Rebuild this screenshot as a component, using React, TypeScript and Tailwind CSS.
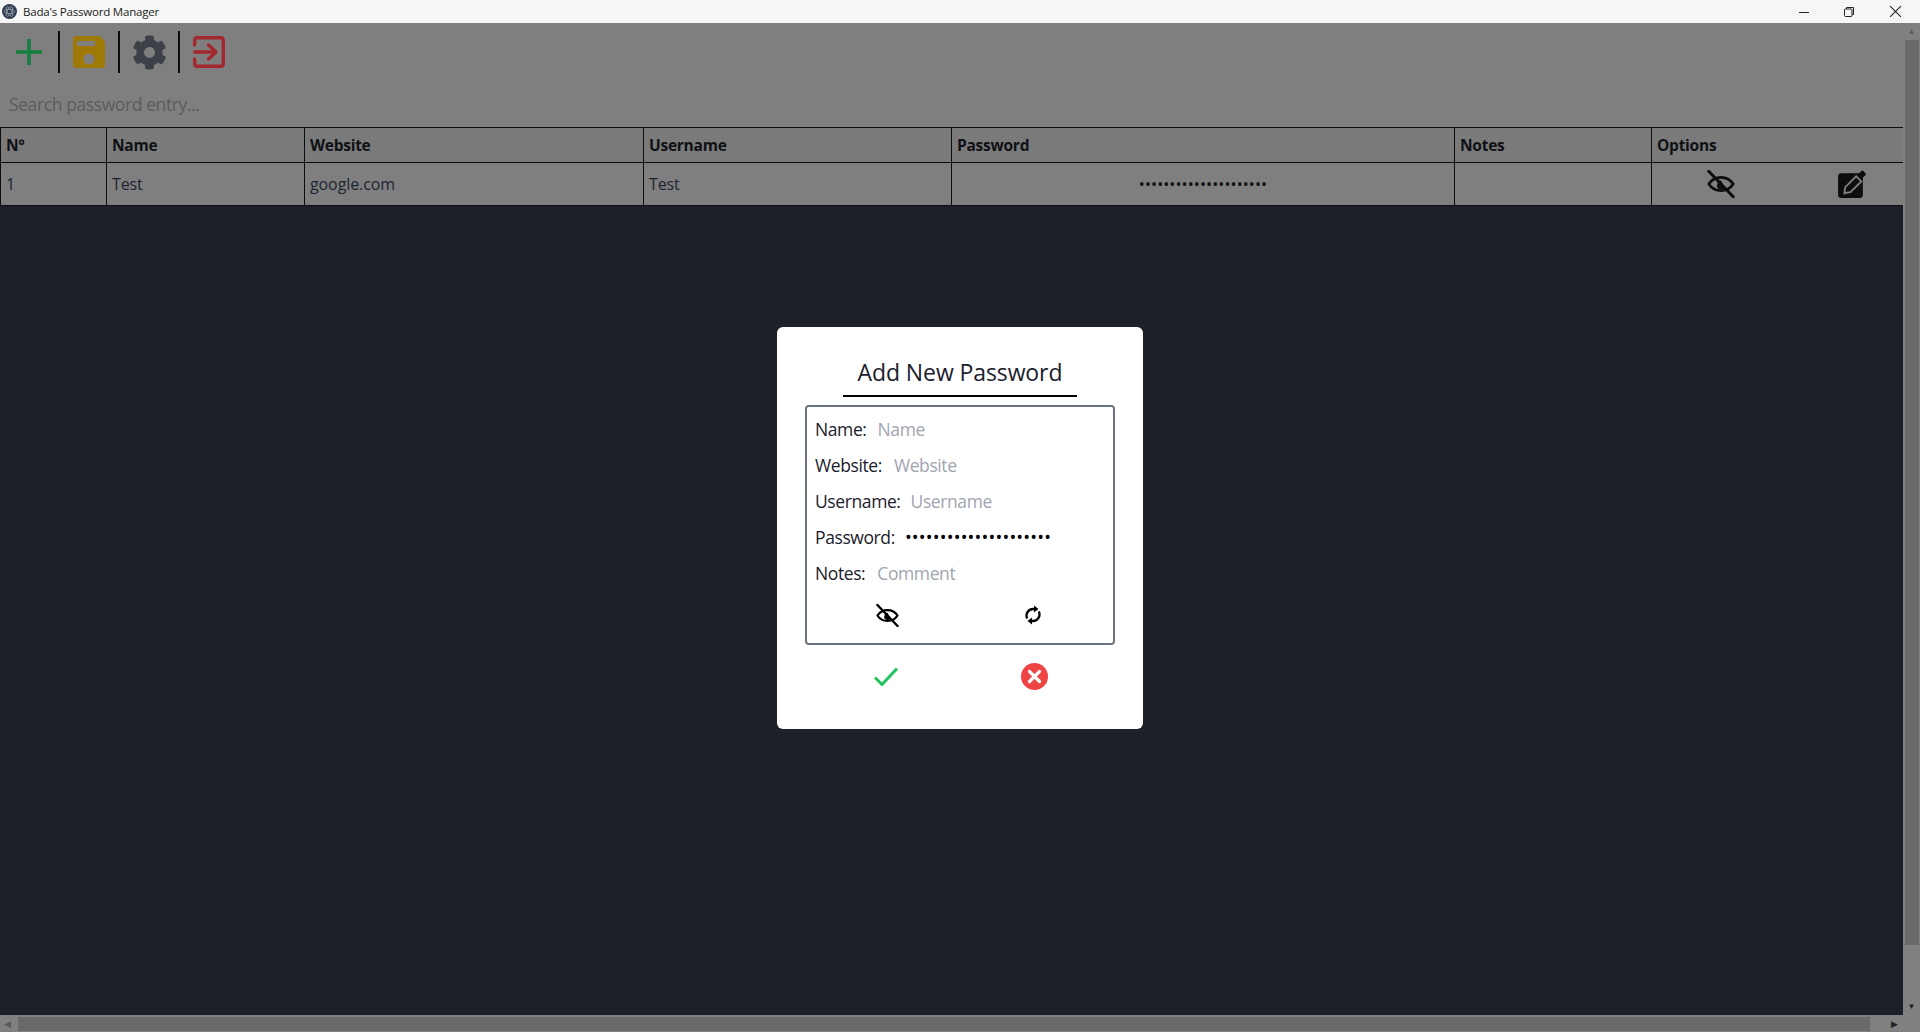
import React from "react";
import { FaCog } from "react-icons/fa";

const font = { fontFamily: '"Open Sans", "Noto Sans", sans-serif' };

function EyeOff({ className }: { className: string }) {
  return (
    <svg viewBox="0 0 24 24" fill="none" stroke="currentColor" strokeWidth={2.300} strokeLinecap="round" strokeLinejoin="round" className={className}>
      <path d="M1.500 12C4 8.200 7.500 6.300 12 6.300s8 1.900 10.500 5.700c-2.500 3.800-6 5.700-10.500 5.700S4 15.800 1.500 12z" />
      <path d="M9 12a3 3 0 0 1 3-3l3 6a3 3 0 0 1-6-3z" fill="currentColor" stroke="none" />
      <path d="M1.500 1l21 22" strokeWidth={2.500} />
    </svg>
  );
}

function Refresh({ className }: { className: string }) {
  return (
    <svg viewBox="0 0 16 20" className={className}>
      <g fill="none" stroke="currentColor" strokeWidth="2.300">
        <path d="M2.200 13.500A6.600 6.600 0 0 1 8 4h1.500" />
        <path d="M13.800 6.500A6.600 6.600 0 0 1 8 16H6.500" />
      </g>
      <path d="M9 0.500L13.500 4 9 7.500z" fill="currentColor" />
      <path d="M7 12.500L2.500 16 7 19.500z" fill="currentColor" />
    </svg>
  );
}

const columns = ["N°", "Name", "Website", "Username", "Password", "Notes", "Options"];
const rowCell = "flex h-[42px] items-center border-r border-[#0d0d0d] bg-[#7f7f7f] pl-[5px] text-[16px] tracking-[-0.1px] text-[#1b2530]";

function Field({ label, placeholder, gap }: { label: string; placeholder: string; gap: string }) {
  return (
    <div className="flex h-9 items-center text-[17.500px] tracking-[-0.4px]">
      <span className="text-[#1a202c]">{label}</span>
      <span className={`${gap} text-[#a1a5b0]`}>{placeholder}</span>
    </div>
  );
}

export default function App() {
  return (
    <div className="relative flex h-[1032px] w-[1920px] flex-col overflow-hidden bg-[#1b2029]" style={font}>
      <div className="flex h-[23px] shrink-0 items-center bg-[#f6f6f6]">
        <svg viewBox="0 0 18 18" className="ml-[2px] h-[15px] w-[15px]">
          <circle cx="9" cy="9" r="9" fill="#2f3a4c" />
          <g fill="none" stroke="#a9b4c4" strokeWidth="0.8">
            <ellipse cx="9" cy="9" rx="6.500" ry="2.600" />
            <ellipse cx="9" cy="9" rx="6.500" ry="2.600" transform="rotate(60 9 9)" />
            <ellipse cx="9" cy="9" rx="6.500" ry="2.600" transform="rotate(120 9 9)" />
          </g>
        </svg>
        <span className="ml-[6px] text-[11.500px] tracking-[-0.2px] text-[#222]">Bada's Password Manager</span>
        <div className="ml-auto flex items-center">
          <svg viewBox="0 0 12 12" className="mr-[33px] h-3 w-3"><path d="M1 6.500h10" stroke="#222" strokeWidth="1" /></svg>
          <svg viewBox="0 0 12 12" className="mr-[34px] h-3 w-3" fill="none" stroke="#222" strokeWidth="1"><rect x="1.500" y="3" width="7.500" height="7.500" rx="1" /><path d="M3.500 3V1.500h7v7H9" /></svg>
          <svg viewBox="0 0 12 12" className="mr-[18px] h-[13px] w-[13px]" fill="none" stroke="#222" strokeWidth="1"><path d="M1 1l10 10M11 1L1 11" /></svg>
        </div>
      </div>

      <div className="flex min-h-0 flex-1">
        <div className="flex min-w-0 flex-1 flex-col">
          <div className="flex-1">
            <div className="h-[104px] bg-[#7f7f7f]">
              <div className="flex items-center pt-[8px]">
                <div className="flex h-[42px] w-[60px] items-center justify-center border-r-2 border-[#0b0b0b]">
                  <svg viewBox="0 0 26 26" className="h-[26px] w-[26px]" fill="none" stroke="#157f3f" strokeWidth="3.600"><path d="M13 0v26M0 13h26" /></svg>
                </div>
                <div className="flex h-[42px] w-[60px] items-center justify-center border-r-2 border-[#0b0b0b]">
                  <svg viewBox="0 0 32 32" className="h-8 w-8"><path fill="#9f7905" fillRule="evenodd" d="M3 0h22c1 0 2 .5 2.500 1l3.500 3.500c.6.6 1 1.500 1 2.500v22a3 3 0 0 1-3 3H3a3 3 0 0 1-3-3V3a3 3 0 0 1 3-3zM4 5v5h18V5zM16 17.500a5.500 5.500 0 1 0 0 11 5.500 5.500 0 0 0 0-11z" /></svg>
                </div>
                <div className="flex h-[42px] w-[60px] items-center justify-center border-r-2 border-[#0b0b0b]">
                  <FaCog className="h-[35px] w-[35px] text-[#3d4047]" />
                </div>
                <div className="flex h-[42px] w-[60px] items-center justify-center pr-[3px]">
                  <svg viewBox="0 0 32 32" className="h-8 w-8" fill="none" stroke="#a3282e" strokeWidth="3.400" strokeLinecap="round" strokeLinejoin="round"><path d="M1.700 9V4A2.300 2.300 0 0 1 4 1.700h24A2.300 2.300 0 0 1 30.300 4v24a2.300 2.300 0 0 1-2.300 2.300H4A2.300 2.300 0 0 1 1.700 28v-5M1.700 16h21M15.500 9l7.500 7-7.500 7" /></svg>
                </div>
              </div>
              <div className="flex h-[54px] items-center pt-[8px] pl-[9px] text-[17.500px] tracking-[-0.4px] text-[#5c5c5c]">Search password entry...</div>
            </div>
            <div className="grid grid-cols-[106px_198px_339px_308px_503px_197px_251px] border-y border-l border-[#0d0d0d] text-[15.500px] leading-none">
              {columns.map((c, i) => (
                <div key={c} className={`flex h-[35px] items-center border-b border-[#0d0d0d] bg-[#7a7a7a] pl-[5px] pt-[2px] font-bold tracking-[-0.25px] text-[#0f1115] ${i < 6 ? "border-r" : ""}`}>{c}</div>
              ))}
              <div className={rowCell}>1</div>
              <div className={rowCell}>Test</div>
              <div className={rowCell}>google.com</div>
              <div className={rowCell}>Test</div>
              <div className="flex h-[42px] items-center justify-center border-r border-[#0d0d0d] bg-[#7f7f7f] text-[16px] tracking-[0.1px] text-[#111]">•••••••••••••••••••••</div>
              <div className="h-[42px] border-r border-[#0d0d0d] bg-[#7f7f7f]" />
              <div className="flex h-[42px] items-center bg-[#7f7f7f] pl-[55px] text-[#0d0d0d]">
                <EyeOff className="h-7 w-7" />
                <svg viewBox="0 0 30 30" className="ml-[101px] h-[31px] w-[31px]">
                  <rect x="2" y="4" width="24" height="24" rx="3" fill="#0d0d0d" />
                  <path d="M8 23.500l1-6L19.500 7l5 5L14 22.500z" fill="#0d0d0d" stroke="#7f7f7f" strokeWidth="1.800" />
                  <path d="M22 4.500l2.500-2.500a1.500 1.500 0 0 1 2 0l2 2a1.500 1.500 0 0 1 0 2L26 8.500z" fill="#0d0d0d" />
                </svg>
              </div>
            </div>
          </div>
          <div className="flex h-[17px] shrink-0 items-center bg-[#808080]">
            <span className="w-[18px] pl-[4px] text-[9px] leading-none text-[#5a5a5a]">◀</span>
            <div className="h-[14px] w-[1852px] bg-[#6a6a6a]" />
            <span className="ml-auto pr-[5px] text-[9px] leading-none text-[#222]">▶</span>
          </div>
        </div>
        <div className="flex w-[17px] shrink-0 flex-col items-center bg-[#808080]">
          <span className="h-[17px] pt-[4px] text-[8px] leading-none text-[#5a5a5a]">▲</span>
          <div className="h-[905px] w-[14px] bg-[#6a6a6a]" />
          <span className="mt-auto h-[34px] pt-[4px] text-[8px] leading-none text-[#222]">▼</span>
        </div>
      </div>

      <div className="absolute inset-x-0 bottom-0 top-[23px] flex items-center justify-center">
        <div className="flex h-[402px] w-[366px] flex-col items-center rounded-md bg-white pt-[28px]">
          <div className="w-[234px] border-b-2 border-black pb-[6px] text-center text-[23px] leading-[34px] tracking-[-0.1px] text-[#1a202c]">Add New Password</div>
          <div className="mt-2 h-[240px] w-[310px] rounded border-2 border-[#6b7280] px-2 pt-[5px]">
            <Field label="Name:" placeholder="Name" gap="ml-[11px]" />
            <Field label="Website:" placeholder="Website" gap="ml-[12px]" />
            <Field label="Username:" placeholder="Username" gap="ml-[10px]" />
            <div className="flex h-9 items-center text-[17.500px] tracking-[-0.4px]">
              <span className="text-[#1a202c]">Password:</span>
              <span className="ml-[10px] text-[18px] tracking-[0.2px] text-black">•••••••••••••••••••••</span>
            </div>
            <Field label="Notes:" placeholder="Comment" gap="ml-[12px]" />
            <div className="mt-[12px] flex items-center text-black">
              <EyeOff className="ml-[61px] h-[23px] w-[23px]" />
              <Refresh className="ml-[126px] h-[20px] w-[16px]" />
            </div>
          </div>
          <div className="mt-[18px] flex items-center">
            <svg viewBox="0 0 24 19" className="ml-[1px] h-[19px] w-[24px]" fill="none" stroke="#22c55e" strokeWidth="3"><path d="M1 10.500l7 7L23 1.500" /></svg>
            <svg viewBox="0 0 27 27" className="ml-[123px] h-[27px] w-[27px]">
              <circle cx="13.500" cy="13.500" r="13.500" fill="#ef4444" />
              <path d="M8.500 8.500l10 10M18.500 8.500l-10 10" stroke="#fff" strokeWidth="3.200" strokeLinecap="round" />
            </svg>
          </div>
        </div>
      </div>
    </div>
  );
}
